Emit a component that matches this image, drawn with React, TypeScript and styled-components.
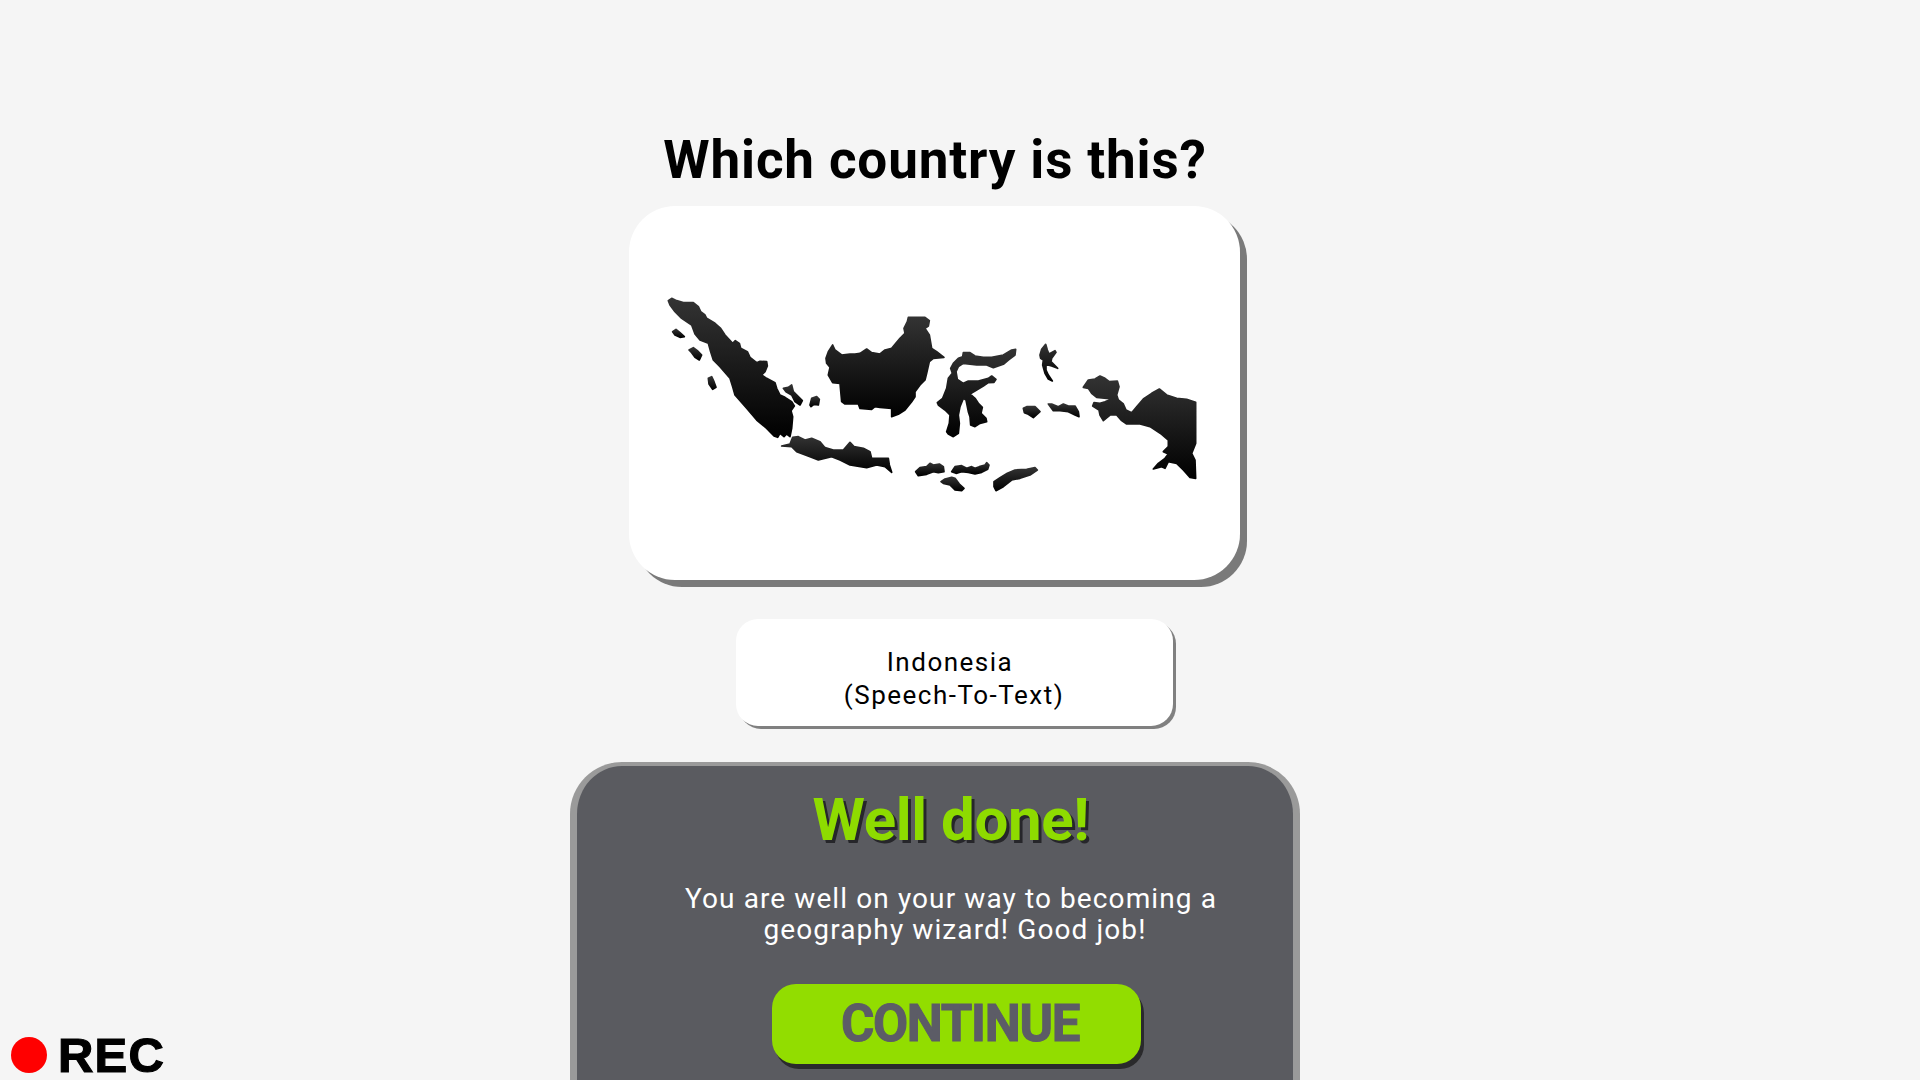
import React from 'react'
import styled, { createGlobalStyle } from 'styled-components'

const GlobalStyle = createGlobalStyle`
  html, body {
    margin: 0;
    padding: 0;
    background: #f5f5f5;
  }
`

const Page = styled.main`
  position: relative;
  width: 1920px;
  height: 1080px;
  overflow: hidden;
  display: flex;
  flex-direction: column;
  align-items: center;
  padding: 130px 50px 0 0;
  box-sizing: border-box;
  background: #f5f5f5;
  font-family: Roboto, 'Liberation Sans', sans-serif;
`

const Title = styled.h1`
  margin: 0 0 16px;
  height: 60px;
  line-height: 60px;
  font-size: 53px;
  font-weight: 700;
  letter-spacing: 0.85px;
  color: #000;
`

const MapCard = styled.section`
  width: 611px;
  height: 374px;
  flex: none;
  background: #fff;
  border-radius: 46px;
  box-shadow: 7px 7px 0 #7a7a7a;
  margin-left: -1px;
`

const MapSvg = styled.svg`
  display: block;
  width: 100%;
  height: 100%;
`

const AnswerBox = styled.div`
  width: 437px;
  height: 107px;
  flex: none;
  margin: 39px 0 36px 38px;
  background: #fff;
  border-radius: 22px;
  box-shadow: 3px 3px 0 #808080;
  font-size: 26px;
  line-height: 33px;
  letter-spacing: 1.5px;
  color: #000;
  text-align: center;
  white-space: pre;
  padding-top: 27px;
  box-sizing: border-box;
`

const Panel = styled.section`
  width: 730px;
  flex: 1;
  box-sizing: border-box;
  padding: 22px 0 0 40px;
  background: #5a5b60;
  border: solid #9a9a9a;
  border-width: 4px 7px 0;
  border-radius: 52px 52px 0 0;
  display: flex;
  flex-direction: column;
  align-items: center;
`

const Heading = styled.h2`
  margin: 0;
  height: 64px;
  padding-left: 6px;
  line-height: 64px;
  font-size: 60px;
  font-weight: 700;
  letter-spacing: -0.4px;
  color: #8edb00;
  text-shadow: 3px 3px 0 #26262a;
  white-space: pre;
`

const Message = styled.p`
  margin: 31px 0 0;
  font-size: 28px;
  line-height: 31px;
  letter-spacing: 1.1px;
  text-align: center;
  color: #fff;
  white-space: pre;
`

const ContinueButton = styled.button`
  width: 369px;
  height: 80px;
  margin: 39px 0 0 2px;
  flex: none;
  border: 0;
  border-radius: 24px;
  background: #92dd00;
  box-shadow: 3px 5px 0 #2a2a2c;
  color: #5c5c66;
  font-family: inherit;
  font-size: 51px;
  font-weight: 700;
  line-height: 80px;
  letter-spacing: -1.3px;
  -webkit-text-stroke: 1px #5c5c66;
  padding: 0 0 0 8px;
`

const RecBadge = styled.div`
  position: absolute;
  left: 11px;
  bottom: 0;
  display: flex;
  align-items: center;
  gap: 11px;
  height: 50px;
`

const RecDot = styled.span`
  width: 36px;
  height: 36px;
  border-radius: 50%;
  background: #ff0000;
`

const RecLabel = styled.span`
  font-family: 'Liberation Sans', Arial, sans-serif;
  font-size: 49px;
  font-weight: 700;
  line-height: 50px;
  letter-spacing: 1.2px;
  color: #000;
  -webkit-text-stroke: 1.2px #000;
`

// traced from the reference, coordinates are 3x page pixels around each origin
const westIslands = [
  'M55 62L65 55L80 62L100 68L130 68L145 80L152 95L165 105L170 115L195 130L212 145L225 165L248 190L256 182L268 190L272 205L292 215L300 232L320 248L330 244L350 245L352 258L345 275L335 285L350 295L375 308L380 325L390 345L405 352L425 365L433 378L423 392L428 410L425 445L420 470L410 462L402 470L390 460L383 472L372 468L350 445L320 420L290 385L255 345L248 320L240 295L210 260L190 240L182 215L175 190L150 180L135 162L125 135L95 115L75 95L60 75Z',
  'M68 155L78 148L90 158L103 170L90 172L75 165Z',
  'M117 210L130 203L142 212L155 225L148 240L135 232L125 218Z',
  'M175 295L185 290L192 305L198 322L188 328L177 312Z',
  'M400 325L415 322L425 315L430 335L445 350L457 362L450 375L435 365L425 345L408 335Z',
  'M480 375L485 355L500 350L508 358L505 375L492 373L483 380Z',
  'M528 235L535 215L548 195L555 210L575 225L600 222L615 222L630 220L650 207L665 218L690 222L705 210L725 205L750 175L765 160L762 145L772 125L775 112L825 112L838 122L835 138L825 145L838 165L845 205L860 215L882 232L850 235L838 245L830 280L825 300L810 315L795 335L795 350L785 365L765 390L745 403L725 410L725 385L690 382L675 380L665 388L630 385L625 372L585 372L575 365L570 310L548 308L535 285L540 262L530 250Z',
  'M395 498L420 492L428 472L445 470L465 480L485 475L510 485L525 503L550 510L580 510L600 487L612 500L640 505L660 515L665 535L715 535L718 555L725 577L705 560L680 555L650 563L600 555L570 540L545 530L505 540L480 530L440 515L425 500Z',
  'M797 575L810 563L830 560L840 550L850 555L868 552L880 560L882 575L865 578L850 575L830 583L805 587Z',
]

const eastIslands = [
  'M95 515L105 500L125 497L140 505L155 500L165 505L178 500L195 495L200 488L207 495L203 508L185 517L165 522L145 517L125 515L108 520Z',
  'M63 545L75 537L95 532L105 535L118 552L132 565L125 572L105 570L90 555L70 550Z',
  'M222 545L240 533L262 520L285 510L320 508L345 503L352 510L330 525L300 535L275 540L250 560L228 572L222 560Z',
  'M92 205L100 190L115 175L128 170L130 158L150 158L165 168L190 172L215 172L250 165L275 150L287 148L285 165L265 180L250 193L220 203L200 195L170 195L130 190L115 200L108 215L112 238L130 250L145 243L175 243L205 235L215 228L228 238L222 247L205 248L190 258L170 270L150 282L165 295L175 310L187 322L183 340L198 355L200 365L180 370L165 380L152 375L150 350L145 335L138 300L130 295L120 320L115 345L118 370L115 400L100 410L85 402L80 395L88 370L90 345L75 330L55 315L52 308L68 295L80 265L85 235L97 220Z',
  'M360 165L365 148L377 133L382 150L387 162L405 152L408 157L395 175L393 185L413 205L395 198L378 193L378 210L385 225L397 243L385 237L375 220L368 195L370 180L362 175Z',
  'M385 312L395 312L415 320L430 312L445 318L465 318L475 335L477 350L465 345L445 335L420 332L400 332Z',
  'M310 325L320 320L345 320L360 335L340 353L325 343L313 338Z',
  'M490 262L505 240L525 237L540 228L555 235L568 245L592 243L597 260L590 285L595 300L610 312L618 330L635 338L650 320L670 297L695 280L718 267L740 285L770 295L800 298L827 307L827 430L815 460L825 480L827 535L810 532L790 510L770 490L745 485L735 505L725 500L700 507L715 490L735 475L745 462L730 455L745 440L745 420L725 403L690 380L660 372L620 372L605 362L590 345L570 345L550 362L540 345L537 330L518 318L522 308L540 310L555 305L580 295L560 295L530 292L515 280L505 265Z',
]

const IndonesiaMap = () => (
  <MapSvg viewBox="629 206 611 374" aria-label="Map of Indonesia">
    <defs>
      <linearGradient id="land" x1="0" y1="0" x2="0" y2="1">
        <stop offset="0" stopColor="#333333" />
        <stop offset="1" stopColor="#000000" />
      </linearGradient>
    </defs>
    <g
      fill="url(#land)"
      stroke="url(#land)"
      strokeWidth="5"
      strokeLinejoin="round"
      transform="translate(650 280) scale(0.33333)"
    >
      {westIslands.map((d) => (
        <path key={d} d={d} />
      ))}
    </g>
    <g
      fill="url(#land)"
      stroke="url(#land)"
      strokeWidth="5"
      strokeLinejoin="round"
      transform="translate(920 300) scale(0.33333)"
    >
      {eastIslands.map((d) => (
        <path key={d} d={d} />
      ))}
    </g>
  </MapSvg>
)

const App = () => (
  <Page>
    <GlobalStyle />
    <Title>Which country is this?</Title>
    <MapCard>
      <IndonesiaMap />
    </MapCard>
    <AnswerBox>
      {'Indonesia\u00a0\n(Speech-To-Text)'}
    </AnswerBox>
    <Panel>
      <Heading>{'Well done!\u00a0'}</Heading>
      <Message>{'You are well on your way to becoming a\u00a0\ngeography wizard! Good job!'}</Message>
      <ContinueButton>CONTINUE</ContinueButton>
    </Panel>
    <RecBadge>
      <RecDot />
      <RecLabel>REC</RecLabel>
    </RecBadge>
  </Page>
)

export default App
